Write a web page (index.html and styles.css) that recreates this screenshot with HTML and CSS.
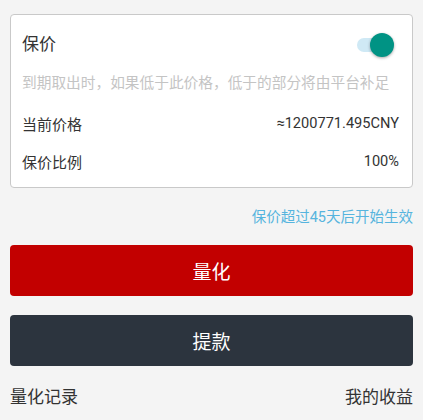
FILE: index.html
```html
<!DOCTYPE html>
<html lang="zh-CN">
<head>
<meta charset="utf-8">
<title>保价</title>
<link rel="stylesheet" href="styles.css">
</head>
<body>
<div class="page">
  <section class="card">
    <div class="card-head">
      <span class="card-title">保价</span>
      <span class="switch on"><span class="switch-track"></span><span class="switch-thumb"></span></span>
    </div>
    <p class="desc">到期取出时，如果低于此价格，低于的部分将由平台补足</p>
    <div class="row row-first">
      <span class="label">当前价格</span>
      <span class="value">≈1200771.495CNY</span>
    </div>
    <div class="row">
      <span class="label">保价比例</span>
      <span class="value">100%</span>
    </div>
  </section>
  <p class="tip">保价超过45天后开始生效</p>
  <button class="btn btn-primary" type="button">量化</button>
  <button class="btn btn-dark" type="button">提款</button>
  <div class="links">
    <a class="link">量化记录</a>
    <a class="link">我的收益</a>
  </div>
</div>
</body>
</html>
```
FILE: styles.css
```css
html, body {
  margin: 0;
  padding: 0;
  background: #f4f4f4;
}
body {
  font-family: Roboto, "Noto Sans CJK SC", "Noto Sans", sans-serif;
  color: #333333;
}
.page {
  padding: 14px 10px 0;
  display: flex;
  flex-direction: column;
}
.card {
  background: #ffffff;
  border: 1px solid #c9c9c9;
  border-radius: 4px;
  padding: 0 13px 7px 11px;
}
.card-head {
  height: 58px;
  display: flex;
  align-items: center;
  justify-content: space-between;
}
.card-title {
  font-size: 17px;
  line-height: 24px;
  color: #333333;
}
.switch {
  position: relative;
  width: 40px;
  height: 26px;
  margin-top: 4px;
  margin-right: 2px;
}
.switch-track {
  position: absolute;
  left: 0;
  top: 5px;
  width: 36px;
  height: 14px;
  border-radius: 7px;
  background: #cfe9f5;
}
.switch-thumb {
  position: absolute;
  right: 3px;
  top: 0;
  width: 24px;
  height: 24px;
  border-radius: 50%;
  background: #009384;
  box-shadow: 0 1px 3px rgba(0, 0, 0, 0.35);
}
.desc {
  margin: 0;
  font-size: 14.7px;
  line-height: 20px;
  color: #c4c4c4;
  white-space: nowrap;
}
.row {
  height: 38px;
  display: flex;
  align-items: center;
  justify-content: space-between;
  font-size: 15px;
}
.row-first {
  margin-top: 11px;
}
.label {
  color: #333333;
}
.value {
  color: #333333;
  font-size: 14.6px;
}
.tip {
  margin: 20px 0 0;
  text-align: right;
  font-size: 14.5px;
  line-height: 20px;
  color: #56b4de;
}
.btn {
  display: flex;
  align-items: center;
  justify-content: center;
  height: 51px;
  border: none;
  border-radius: 4px;
  color: #ffffff;
  font-family: inherit;
  font-size: 19px;
  padding: 0;
}
.btn-primary {
  margin-top: 17px;
  background: #c20000;
}
.btn-dark {
  margin-top: 19px;
  background: #2c343e;
}
.links {
  margin-top: 19px;
  display: flex;
  justify-content: space-between;
  font-size: 17px;
  line-height: 24px;
}
.link {
  color: #333333;
}
```
